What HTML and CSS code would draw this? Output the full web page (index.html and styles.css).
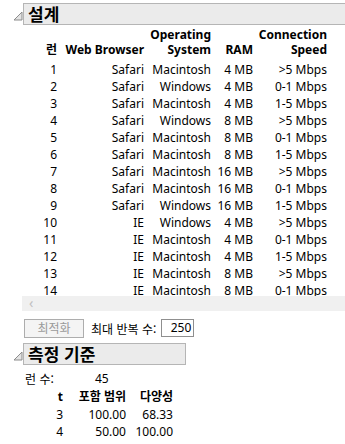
FILE: index.html
```html
<!DOCTYPE html>
<html lang="ko">
<head>
  <meta charset="UTF-8" />
  <title>설계</title>
  <link rel="stylesheet" href="styles.css">
</head>
<body>

<div class="outline">
  <div class="outline-head">
    <svg class="disclose" width="10" height="10" viewBox="0 0 10 10"><polygon points="9,1 9,9 1,9" fill="#e4e4e4" stroke="#8c8c8c" stroke-width="1"/></svg>
    <div class="title-bar wide">설계</div>
  </div>
  <div class="outline-body">
    <div class="scroll-view">
      <table class="design">
        <colgroup>
          <col class="c-run"><col class="c-web"><col class="c-os"><col class="c-ram"><col class="c-speed">
        </colgroup>
        <thead>
          <tr><th>런</th><th>Web Browser</th><th>Operating<br>System</th><th>RAM</th><th>Connection<br>Speed</th></tr>
        </thead>
        <tbody>
          <tr><td>1</td><td>Safari</td><td>Macintosh</td><td>4 MB</td><td>&gt;5 Mbps</td></tr>
          <tr><td>2</td><td>Safari</td><td>Windows</td><td>4 MB</td><td>0-1 Mbps</td></tr>
          <tr><td>3</td><td>Safari</td><td>Macintosh</td><td>4 MB</td><td>1-5 Mbps</td></tr>
          <tr><td>4</td><td>Safari</td><td>Windows</td><td>8 MB</td><td>&gt;5 Mbps</td></tr>
          <tr><td>5</td><td>Safari</td><td>Macintosh</td><td>8 MB</td><td>0-1 Mbps</td></tr>
          <tr><td>6</td><td>Safari</td><td>Macintosh</td><td>8 MB</td><td>1-5 Mbps</td></tr>
          <tr><td>7</td><td>Safari</td><td>Macintosh</td><td>16 MB</td><td>&gt;5 Mbps</td></tr>
          <tr><td>8</td><td>Safari</td><td>Macintosh</td><td>16 MB</td><td>0-1 Mbps</td></tr>
          <tr><td>9</td><td>Safari</td><td>Windows</td><td>16 MB</td><td>1-5 Mbps</td></tr>
          <tr><td>10</td><td>IE</td><td>Windows</td><td>4 MB</td><td>&gt;5 Mbps</td></tr>
          <tr><td>11</td><td>IE</td><td>Macintosh</td><td>4 MB</td><td>0-1 Mbps</td></tr>
          <tr><td>12</td><td>IE</td><td>Macintosh</td><td>4 MB</td><td>1-5 Mbps</td></tr>
          <tr><td>13</td><td>IE</td><td>Macintosh</td><td>8 MB</td><td>&gt;5 Mbps</td></tr>
          <tr><td>14</td><td>IE</td><td>Macintosh</td><td>8 MB</td><td>0-1 Mbps</td></tr>
        </tbody>
      </table>
    </div>
    <div class="hscroll"><span class="arrow">&lsaquo;</span></div>
    <div class="controls">
      <button class="btn" disabled>최적화</button>
      <span class="label">최대 반복 수:</span>
      <span class="field">250</span>
    </div>
  </div>
</div>

<div class="outline">
  <div class="outline-head">
    <svg class="disclose" width="10" height="10" viewBox="0 0 10 10"><polygon points="9,1 9,9 1,9" fill="#e4e4e4" stroke="#8c8c8c" stroke-width="1"/></svg>
    <div class="title-bar narrow">측정 기준</div>
  </div>
  <div class="outline-body">
    <div class="runs"><span class="runs-label">런 수:</span><span>45</span></div>
    <table class="criteria">
      <colgroup><col class="k-t"><col class="k-cov"><col class="k-div"></colgroup>
      <thead><tr><th>t</th><th>포함 범위</th><th>다양성</th></tr></thead>
      <tbody>
        <tr><td>3</td><td>100.00</td><td>68.33</td></tr>
        <tr><td>4</td><td>50.00</td><td>100.00</td></tr>
      </tbody>
    </table>
  </div>
</div>

</body>
</html>
```

FILE: styles.css
```css
body {
  margin: 0;
  width: 345px;
  height: 444px;
  overflow: hidden;
  background: #fff;
  color: #000;
  font-family: "Noto Sans", "Noto Sans CJK KR", sans-serif;
  font-size: 12px;
}
.outline-head {
  display: flex;
  align-items: center;
  padding-top: 3px;
}
.disclose {
  margin-left: 13px;
  margin-top: 4px;
}
.title-bar {
  height: 20px;
  line-height: 20px;
  margin-left: 0;
  padding-left: 4px;
  background: #ebebeb;
  border: 1px solid #b5b5b5;
  border-right: none;
  font-family: "Noto Sans CJK KR", sans-serif;
  font-weight: bold;
  font-size: 17px;
  flex: 1;
}
.title-bar.narrow {
  flex: 0 0 157px;
  border-right: 1px solid #b5b5b5;
}
.outline-body {
  padding-left: 22px;
}
.scroll-view {
  height: 271px;
  overflow: hidden;
}
table {
  border-collapse: collapse;
  table-layout: fixed;
}
th, td {
  padding: 0;
  text-align: right;
  white-space: nowrap;
}
.design th {
  font-weight: bold;
  line-height: 15px;
  vertical-align: bottom;
  padding-top: 2px;
  padding-bottom: 4px;
}
.design td {
  height: 17px;
  line-height: 17px;
}
.c-run { width: 35px; }
.c-web { width: 87px; }
.c-os { width: 67px; }
.c-ram { width: 42px; }
.c-speed { width: 74px; }
.hscroll {
  height: 15px;
  background: #f0f0f0;
  color: #c0c0c0;
  font-size: 14px;
  line-height: 14px;
  padding-left: 7px;
}
.controls {
  display: flex;
  align-items: center;
  margin-top: 7px;
  height: 20px;
}
.btn {
  width: 60px;
  height: 19px;
  margin-left: 2px;
  padding: 0;
  background: #f4f4f4;
  border: 1px solid #adadad;
  color: #9a9a9a;
  font-family: "Noto Sans CJK KR", sans-serif;
  font-size: 12px;
  line-height: 16px;
}
.label {
  margin-left: 7px;
  font-family: "Noto Sans CJK KR", sans-serif;
}
.field {
  margin-left: 5px;
  width: 29px;
  height: 16px;
  line-height: 16px;
  border: 1px solid #8f8f8f;
  text-align: right;
  padding-right: 2px;
}
.outline + .outline .outline-head {
  padding-top: 5px;
}
.runs {
  display: flex;
  margin-top: 5px;
  padding-left: 3px;
  line-height: 17px;
}
.runs-label {
  width: 70px;
  font-family: "Noto Sans CJK KR", sans-serif;
}
.criteria {
  margin-top: 1px;
}
.criteria th {
  font-weight: bold;
  line-height: 18px;
  font-family: "Noto Sans", "Noto Sans CJK KR", sans-serif;
}
.criteria td {
  line-height: 17px;
}
.k-t { width: 41px; }
.k-cov { width: 63px; }
.k-div { width: 47px; }
```
